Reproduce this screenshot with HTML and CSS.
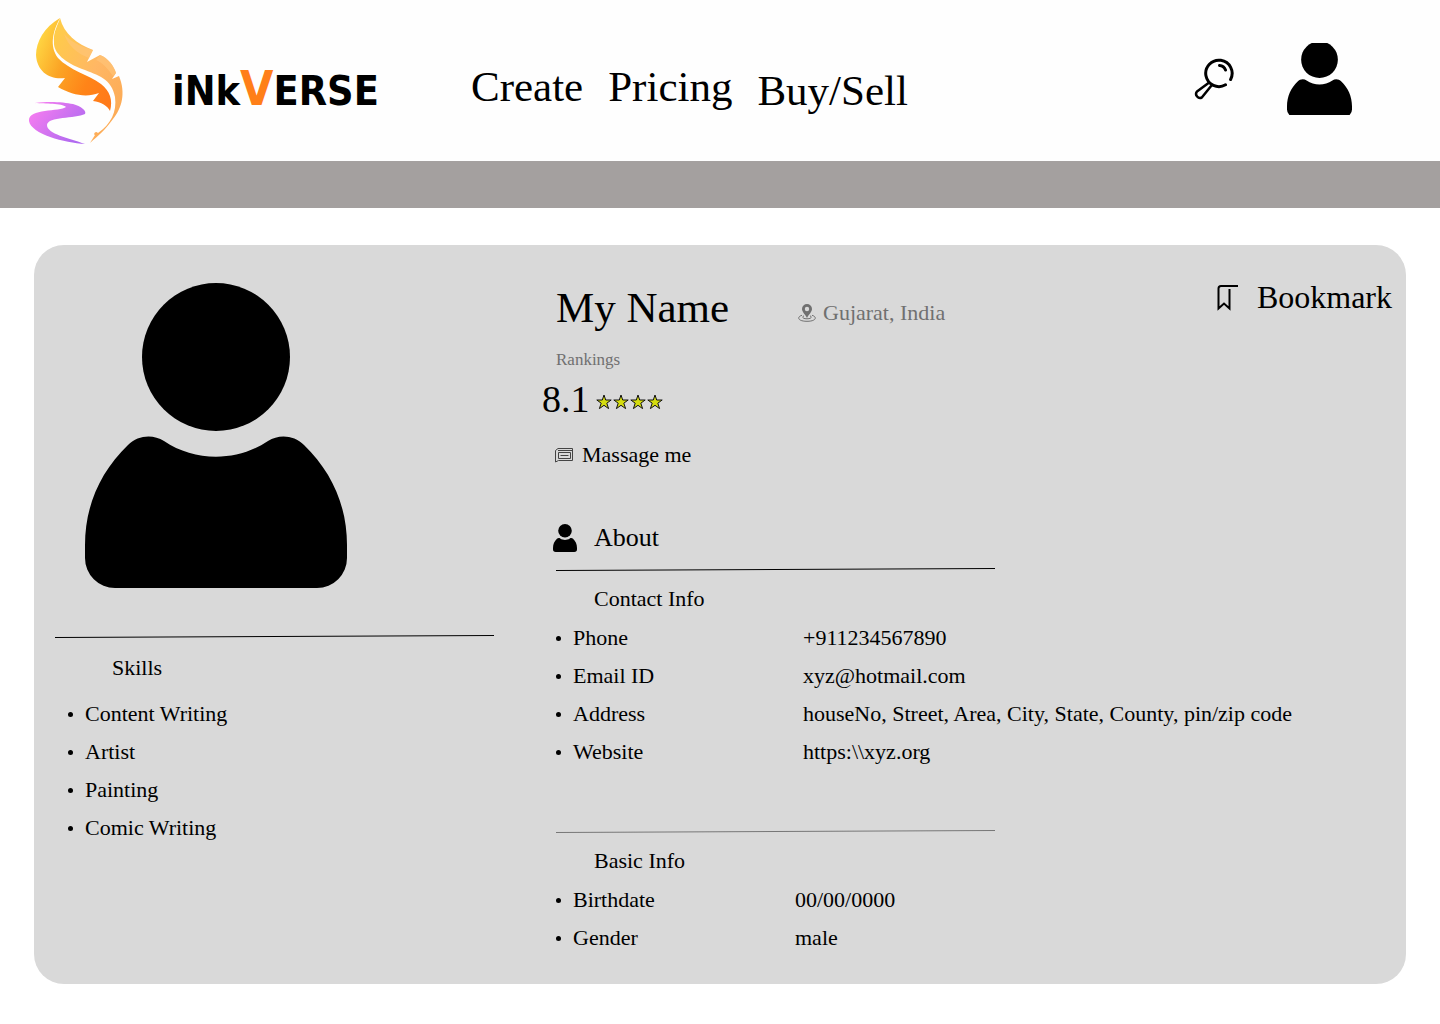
FILE: index.html
```html
<!DOCTYPE html>
<html lang="en">
<head>
<meta charset="utf-8">
<meta name="viewport" content="width=device-width, initial-scale=1">
<title>Inkverse – Profile</title>
<link rel="stylesheet" href="styles.css">
</head>
<body>
<svg class="defs" aria-hidden="true">
  <defs>
    <g id="person">
      <circle cx="131" cy="74" r="74"/>
      <path d="M0 262C0 222 16 188 43 162C53 152 68 151 79 158C110 179 152 179 183 158C194 151 209 152 219 162C246 188 262 222 262 262V275A30 30 0 0 1 232 305H30A30 30 0 0 1 0 275Z"/>
    </g>
    <path id="star" d="M8 1L9.700 6H15.200L10.800 9.200L12.600 14.600L8 11.300L3.400 14.600L5.200 9.200L.8 6H6.300Z"/>
  </defs>
</svg>

<header class="site-header">
  <a class="brand" href="#" aria-label="Inkverse home">
    <svg class="brand-mark" viewBox="0 0 160 160" aria-hidden="true">
      <defs>
        <linearGradient id="leafDark" x1="0" y1=".3" x2="1" y2=".8">
          <stop offset="0" stop-color="#ffd542"/><stop offset=".35" stop-color="#fba425"/><stop offset=".7" stop-color="#ff8418"/><stop offset="1" stop-color="#ff7a1a"/>
        </linearGradient>
        <linearGradient id="leafLight" x1="0" y1="0" x2="1" y2="1">
          <stop offset="0" stop-color="#ffcf45"/><stop offset=".5" stop-color="#ffb764"/><stop offset="1" stop-color="#fba650"/>
        </linearGradient>
        <linearGradient id="ribbon" x1="0" y1="0" x2="1" y2=".6">
          <stop offset="0" stop-color="#ff7ff0"/><stop offset="1" stop-color="#b06af0"/>
        </linearGradient>
      </defs>
      <path fill="url(#leafDark)" d="M60 18C44 27 36 42 36 55C37 72 50 80 65 78L58 87C72 95 86 98 99 93L93 101C101 102 108 106 110 111C113 100 110 91 101 84C89 75 69 70 58 58C49 46 53 31 60 18Z"/>
      <path fill="url(#leafLight)" d="M60 18C64 34 77 44 93 50L87 62L100 55C108 58 114 66 116 73L112 79L119 76C126 93 122 108 113 119C106 129 98 136 90 143L95 135C93 135 95 130 98 133C111 124 117 112 115 97C112 79 98 75 82 69C66 63 53 53 54 42C53 32 58 25 60 18Z"/>
      <path fill="#ffc77c" opacity=".6" d="M64 34C74 45 84 47 93 50L89 58C78 54 68 46 64 34ZM100 55C108 58 114 66 116 73L113 76C108 69 103 63 96 60Z"/>
      <path fill="url(#ribbon)" d="M35 103C48 101 64 102 73 104C81 106 87 111 85 114C75 119 48 116 47 125C47 134 69 138 85 144C65 143 31 134 29 121C28 108 60 112 66 107C62 103 45 104 35 103Z"/>
    </svg>
    <span class="brand-name">iNk<span class="brand-v">V</span>ERSE</span>
  </a>
  <nav class="main-nav" aria-label="Main">
    <a href="#">Create</a>
    <a href="#">Pricing</a>
    <a class="nav-low" href="#">Buy/Sell</a>
  </nav>
  <div class="header-tools">
    <button class="icon-button" type="button" aria-label="Search">
      <svg class="search-icon" viewBox="0 0 42 42" fill="none" stroke="#000" stroke-linecap="round" stroke-linejoin="round" aria-hidden="true">
        <path stroke-width="3" d="M31.500 26.800A13.200 13.200 0 1 1 36.600 21.500M25.500 7.500A7 7 0 0 1 31.500 12"/>
        <path stroke-width="2.500" d="M14.500 25L3 33.500A3.900 3.900 0 0 0 8 39.300L17.500 27.500"/>
      </svg>
    </button>
    <button class="icon-button" type="button" aria-label="Account">
      <svg class="account-icon" viewBox="0 7 262 290" aria-hidden="true"><use href="#person"/></svg>
    </button>
  </div>
</header>
<div class="band"></div>

<main class="profile">
  <aside class="side">
    <svg class="avatar" viewBox="0 0 262 305" role="img" aria-label="Profile picture"><use href="#person"/></svg>
    <svg class="rule rule-side" viewBox="0 0 439 3" preserveAspectRatio="none" aria-hidden="true"><path d="M0 2.500L439 .5"/></svg>
    <h2 class="section-title skills-title">Skills</h2>
    <ul class="list skills">
      <li>Content Writing</li>
      <li>Artist</li>
      <li>Painting</li>
      <li>Comic Writing</li>
    </ul>
  </aside>

  <section class="details">
    <div class="title-row">
      <h1 class="name">My Name</h1>
      <p class="location">
        <svg class="pin-icon" viewBox="0 0 18 18" aria-hidden="true">
          <path fill="#707070" fill-rule="evenodd" d="M9 0A5 5 0 0 1 14 5C14 8 11 10 9 14C7 10 4 8 4 5A5 5 0 0 1 9 0ZM9 2.800A2.200 2.200 0 1 0 9 7.200A2.200 2.200 0 1 0 9 2.800Z"/>
          <path fill="none" stroke="#707070" d="M6 11.800C4 12.500 4 14.800 9 14.800S14 12.500 12 11.800M4 11.300C-1 12.500-1 17.300 9 17.300S19 12.500 14 11.300"/>
        </svg>
        Gujarat, India
      </p>
      <button class="bookmark" type="button">
        <svg class="bookmark-icon" viewBox="0 0 22 27" fill="none" stroke="#000" stroke-width="2" aria-hidden="true">
          <path d="M21 2H4Q1.500 2 1.500 4.500V24.500L7 19.500L12.500 24.500V5"/>
        </svg>
        Bookmark
      </button>
    </div>
    <p class="rank-label">Rankings</p>
    <div class="score">
      <span>8.1</span>
      <svg class="stars" viewBox="0 0 67 16" fill="#d5dd10" stroke="#111" aria-label="4 stars" role="img">
        <use href="#star"/><use href="#star" x="17"/><use href="#star" x="34"/><use href="#star" x="51"/>
      </svg>
    </div>
    <button class="message" type="button">
      <svg class="message-icon" viewBox="0 0 18 16" fill="none" stroke="#444" aria-hidden="true">
        <path d="M.5 15V3.500L3 1.500H17.500V13.500H3.500L.5 15M3 3.500H17.500M3.500 5.500H15.500V11.500H3.500ZM5.500 8.500H13.500"/>
      </svg>
      Massage me
    </button>

    <h2 class="about">
      <svg class="about-icon" viewBox="0 0 262 305" aria-hidden="true"><use href="#person"/></svg>
      About
    </h2>
    <svg class="rule" viewBox="0 0 439 3" preserveAspectRatio="none" aria-hidden="true"><path d="M0 2.500L439 .5"/></svg>
    <h3 class="section-title">Contact Info</h3>
    <ul class="list facts">
      <li><span>Phone</span><span>+911234567890</span></li>
      <li><span>Email ID</span><span>xyz@hotmail.com</span></li>
      <li><span>Address</span><span>houseNo, Street, Area, City, State, County, pin/zip code</span></li>
      <li><span>Website</span><span>https:\\xyz.org</span></li>
    </ul>
    <svg class="rule rule-basic" viewBox="0 0 439 3" preserveAspectRatio="none" aria-hidden="true"><path d="M0 2.500L439 .5"/></svg>
    <h3 class="section-title">Basic Info</h3>
    <ul class="list facts basic">
      <li><span>Birthdate</span><span>00/00/0000</span></li>
      <li><span>Gender</span><span>male</span></li>
    </ul>
  </section>
</main>
</body>
</html>
```

FILE: styles.css
```css
* {
  box-sizing: border-box;
  margin: 0;
  padding: 0;
}

body {
  background: #fff;
  color: #000;
  font-family: "Liberation Serif", serif;
  font-size: 22px;
  line-height: 38px;
}

a {
  color: inherit;
  text-decoration: none;
}

button {
  border: 0;
  background: none;
  color: inherit;
  font: inherit;
  cursor: pointer;
}

svg {
  display: block;
  flex: none;
}

h1, h2, h3 {
  font-weight: 400;
}

.defs {
  position: absolute;
  width: 0;
  height: 0;
}

/* Header */
.site-header {
  display: flex;
  align-items: flex-start;
  min-height: 161px;
  padding-right: 88px;
  background: #fefefe;
}

.brand {
  display: flex;
  width: 471px;
  flex: none;
}

.brand-mark {
  width: 160px;
  height: 160px;
}

.brand-name {
  padding: 58px 0 0 12px;
  font-family: "DejaVu Sans Condensed", "DejaVu Sans", sans-serif;
  font-size: 41px;
  font-weight: 700;
  line-height: 60px;
}

.brand-v {
  color: #ff7f18;
  font-size: 48px;
}

.main-nav {
  display: flex;
  gap: 25px;
  padding-top: 61px;
  font-size: 43px;
  line-height: 52px;
}

.nav-low {
  padding-top: 4px;
}

.header-tools {
  display: flex;
  gap: 51px;
  margin-left: auto;
  padding-top: 43px;
}

.search-icon {
  width: 42px;
  height: 42px;
  margin-top: 15px;
}

.icon-button {
  align-self: flex-start;
}

.account-icon {
  width: 65px;
  height: 72px;
}

.band {
  height: 47px;
  background: #a4a09f;
}

/* Profile card */
.profile {
  display: grid;
  grid-template-columns: 439px 1fr;
  gap: 62px;
  margin: 37px 34px 40px;
  padding: 38px 14px 27px 21px;
  border-radius: 30px;
  background: #d9d9d9;
}

.avatar {
  width: 262px;
  height: 305px;
  margin-left: 30px;
}

.rule {
  width: 439px;
  height: 3px;
  margin: 11px 0 9px;
  stroke: #000;
}

.rule-side {
  margin: 47px 0 11px;
}

.rule-basic {
  margin-top: 59px;
  stroke: #777;
}

.section-title {
  padding-left: 38px;
  font-size: 22px;
}

.skills-title {
  padding-left: 57px;
}

.list {
  list-style: none;
}

.list li {
  display: flex;
}

.list li::before {
  content: "";
  width: 5px;
  height: 5px;
  margin: 17px 12px 0 0;
  border-radius: 50%;
  background: #000;
}

.skills {
  padding: 8px 0 0 13px;
}

.facts {
  padding-top: 1px;
}

.facts span:first-child {
  width: 230px;
}

.basic span:first-child {
  width: 222px;
}

.title-row {
  display: flex;
  line-height: 50px;
}

.name {
  width: 242px;
  font-size: 43px;
}

.location {
  display: flex;
  gap: 7px;
  padding-top: 5px;
  color: #707070;
}

.pin-icon {
  width: 18px;
  height: 18px;
  margin-top: 16px;
}

.bookmark {
  display: flex;
  align-items: center;
  align-self: flex-start;
  gap: 18px;
  margin: -5px 0 0 auto;
  font-size: 32px;
  line-height: 38px;
}

.bookmark-icon {
  width: 22px;
  height: 27px;
}

.rank-label {
  margin-top: 10px;
  color: #707070;
  font-size: 17px;
  line-height: 24px;
}

.score {
  display: flex;
  align-items: center;
  gap: 6px;
  margin: 3px 0 0 -14px;
  font-size: 38px;
  line-height: 48px;
}

.stars {
  width: 67px;
  height: 16px;
  margin-top: 6px;
}

.message {
  display: flex;
  align-items: center;
  gap: 9px;
  margin: 13px 0 0 -1px;
}

.message-icon {
  width: 18px;
  height: 16px;
}

.about {
  display: flex;
  align-items: center;
  gap: 17px;
  margin: 45px 0 0 -3px;
  font-size: 26px;
}

.about-icon {
  width: 24px;
  height: 28px;
}
```
